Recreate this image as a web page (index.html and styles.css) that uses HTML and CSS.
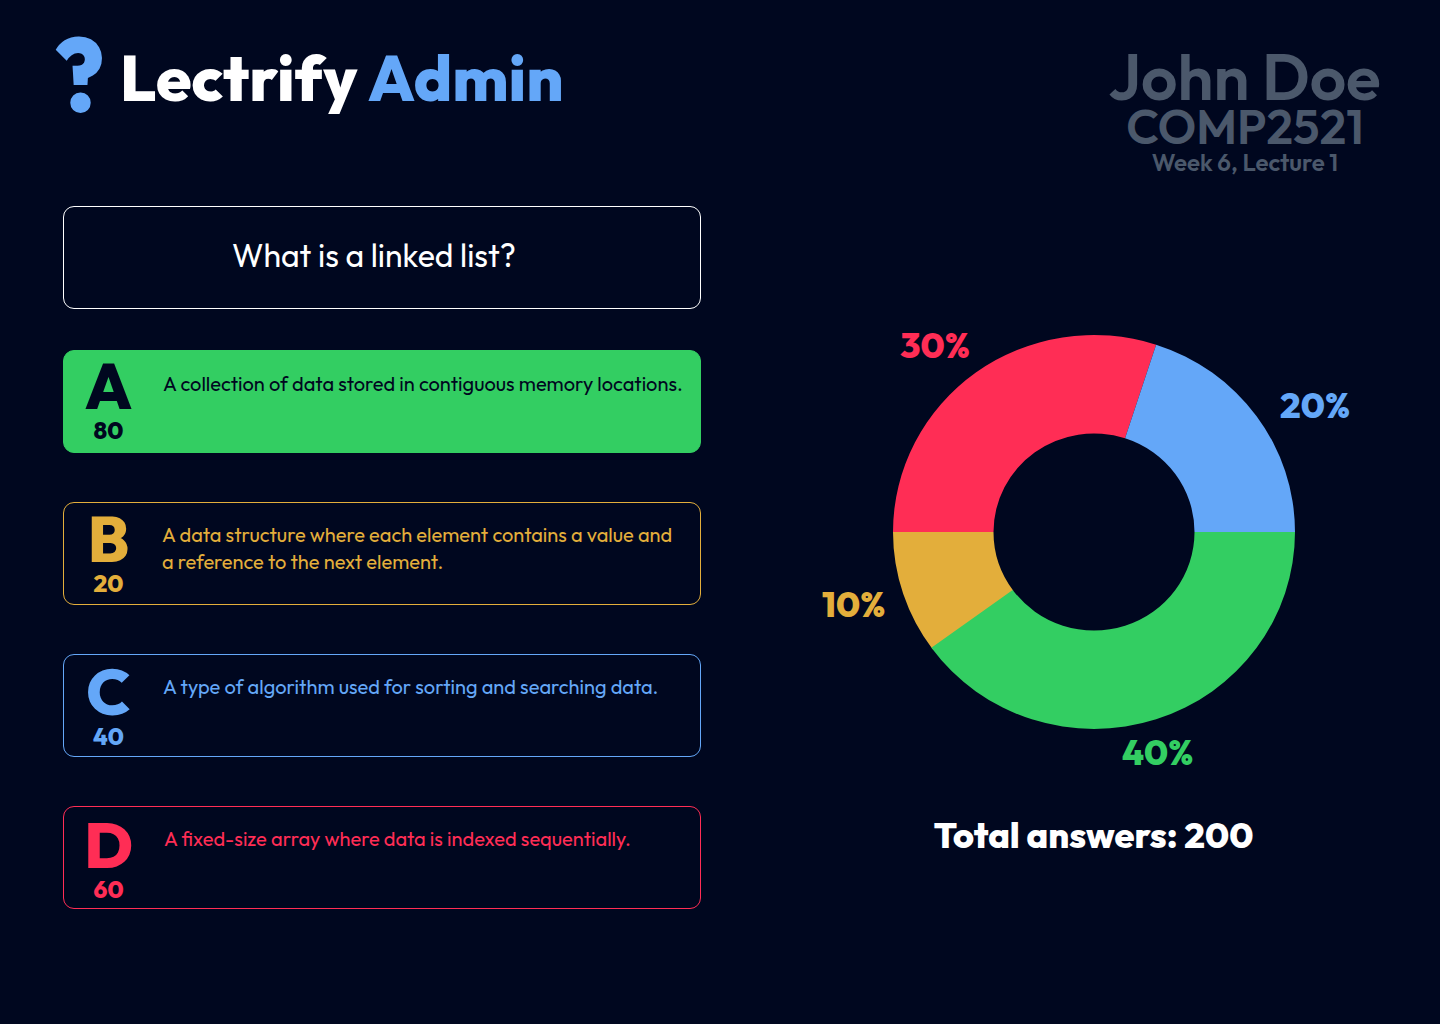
FILE: index.html
```html
<!DOCTYPE html>
<html lang="en">
<head>
<meta charset="utf-8">
<title>Lectrify Admin</title>
<link rel="stylesheet" href="styles.css">
</head>
<body>
<header class="header">
  <div class="brand">
    <span class="logo">?</span>
    <h1 class="title"><span class="title-name">Lectrify</span> <span class="title-role">Admin</span></h1>
  </div>
  <div class="session">
    <div class="lecturer">John Doe</div>
    <div class="course">COMP2521</div>
    <div class="lecture">Week 6, Lecture 1</div>
  </div>
</header>
<main class="main">
  <section class="poll">
    <h2 class="question">What is a linked list?</h2>
    <div class="answers">
      <article class="answer answer-a">
        <div class="tally"><span class="letter">A</span><span class="count">80</span></div>
        <p class="text">A collection of data stored in contiguous memory locations.</p>
      </article>
      <article class="answer answer-b">
        <div class="tally"><span class="letter">B</span><span class="count">20</span></div>
        <p class="text">A data structure where each element contains a value and<br>a reference to the next element.</p>
      </article>
      <article class="answer answer-c">
        <div class="tally"><span class="letter">C</span><span class="count">40</span></div>
        <p class="text">A type of algorithm used for sorting and searching data.</p>
      </article>
      <article class="answer answer-d">
        <div class="tally"><span class="letter">D</span><span class="count">60</span></div>
        <p class="text">A fixed-size array where data is indexed sequentially.</p>
      </article>
    </div>
  </section>
  <section class="results">
    <svg class="chart" viewBox="800 320 588 460" role="img" aria-label="Share of answers">
      <path class="red" d="M893 532A201 197 0 0 1 1156.110 344.640L1125.060 438.320A100.500 98.500 0 0 0 993.500 532Z"/>
      <path class="blue" d="M1156.110 344.640A201 197 0 0 1 1295 532H1194.500A100.500 98.500 0 0 0 1125.060 438.320Z"/>
      <path class="yellow" d="M932.600 649.300A201 197 0 0 1 893 532H993.500A100.500 98.500 0 0 0 1013.300 590.700Z"/>
      <path class="green" d="M1295 532A201 197 0 0 1 931.390 647.800L1012.690 589.900A100.500 98.500 0 0 0 1194.500 532Z"/>
      <text class="share red" x="900" y="358">30%</text>
      <text class="share blue" x="1280" y="418">20%</text>
      <text class="share yellow" x="822" y="617">10%</text>
      <text class="share green" x="1122" y="765">40%</text>
    </svg>
    <p class="total">Total answers: 200</p>
  </section>
</main>
</body>
</html>
```
FILE: styles.css
```css
:root {
  --night: #00071f;
  --green: #33ce62;
  --yellow: #e3ae3b;
  --blue: #64a7f8;
  --red: #ff2d55;
  --slate: #4b586b;
}

* { box-sizing: border-box; }

body {
  margin: 0;
  width: 1440px;
  height: 1024px;
  overflow: hidden;
  background: var(--night);
  color: #fff;
  font-family: Outfit, Lato, "Open Sans", sans-serif;
}

h1, h2, p { margin: 0; }

.header {
  display: flex;
  justify-content: space-between;
  height: 206px;
  padding: 34px 45px 0 54px;
}

.brand { display: flex; }

.logo {
  width: 50px;
  color: var(--blue);
  font-size: 102.500px;
  line-height: 80px;
  font-weight: 800;
}

.title {
  padding: 4px 0 0 16px;
  font-size: 64px;
  line-height: 80px;
  font-weight: 800;
  white-space: nowrap;
}
.title-role { color: var(--blue); }

.session {
  width: 300px;
  padding-top: 10px;
  color: var(--slate);
  font-weight: 600;
  text-align: center;
  white-space: nowrap;
}
.lecturer { padding-right: 1px; font-size: 64px; line-height: 66px; }
.course { font-size: 48px; line-height: 32px; }
.lecture { font-size: 24px; line-height: 40px; }

.main { display: flex; padding-left: 63px; }

.poll { width: 638px; }

.question {
  height: 103px;
  padding: 23px 16px 0 0;
  border: 1px solid #fff;
  border-radius: 11px;
  font-size: 32px;
  line-height: 50px;
  font-weight: 400;
  text-align: center;
}

.answers {
  display: grid;
  gap: 49px;
  margin-top: 41px;
}

.answer {
  display: flex;
  height: 103px;
  border: 1px solid currentColor;
  border-radius: 11px;
}
.answer-a { background: var(--green); border-color: var(--green); color: var(--night); }
.answer-b { color: var(--yellow); }
.answer-c { color: var(--blue); }
.answer-d { color: var(--red); }

.tally {
  display: flex;
  flex-direction: column;
  align-items: center;
  width: 89px;
  padding-top: 7px;
  font-weight: 800;
}
.answer-b .tally { padding-top: 8px; }
.answer-c .tally { padding-top: 9px; }
.answer-d .tally { padding-top: 10px; }
.letter { font-size: 64px; line-height: 56px; }
.count { font-size: 24px; line-height: 32px; }

.text {
  padding: 18px 0 0 10px;
  font-size: 20px;
  line-height: 27px;
  font-weight: 400;
  white-space: nowrap;
}
.answer-a .text { padding-top: 19px; }
.answer-b .text { padding-left: 9px; }
.answer-d .text { padding-left: 11px; }

.results { width: 588px; margin: 114px 0 0 99px; }

.chart { display: block; width: 588px; height: 460px; }
.red { fill: var(--red); }
.blue { fill: var(--blue); }
.green { fill: var(--green); }
.yellow { fill: var(--yellow); }
.share { font-size: 36px; font-weight: 800; }

.total {
  padding: 35px 1px 0 0;
  font-size: 36px;
  line-height: 40px;
  font-weight: 800;
  text-align: center;
}
```
